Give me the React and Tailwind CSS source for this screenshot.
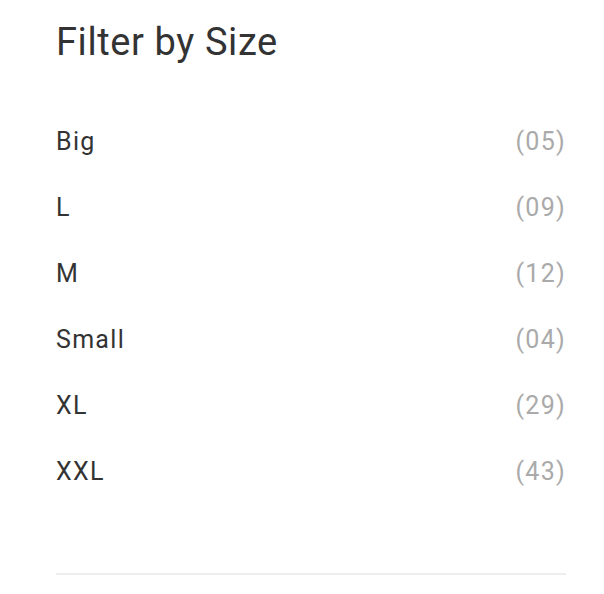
const sizes = [
  { label: 'Big', count: '05' },
  { label: 'L', count: '09' },
  { label: 'M', count: '12' },
  { label: 'Small', count: '04' },
  { label: 'XL', count: '29' },
  { label: 'XXL', count: '43' },
];

export default function App() {
  return (
    <div className="min-h-[594px] bg-white pl-[56px] pr-[38px] pt-[16px]" style={{ fontFamily: 'Roboto, "Liberation Sans", sans-serif' }}>
      <h3 className="text-[38px] leading-[52px] font-normal tracking-[0.6px] text-[#333333]">Filter by Size</h3>
      <ul className="mt-[41px]">
        {sizes.map((s) => (
          <li key={s.label} className="flex items-center justify-between h-[66px] text-[25px] tracking-[1.3px] text-[#333333]">
            <span>{s.label}</span>
            <span className="text-[#aaaaaa]">({s.count})</span>
          </li>
        ))}
      </ul>
      <div className="mt-[68px] h-[2px] bg-[#eeeeee]" />
    </div>
  );
}
